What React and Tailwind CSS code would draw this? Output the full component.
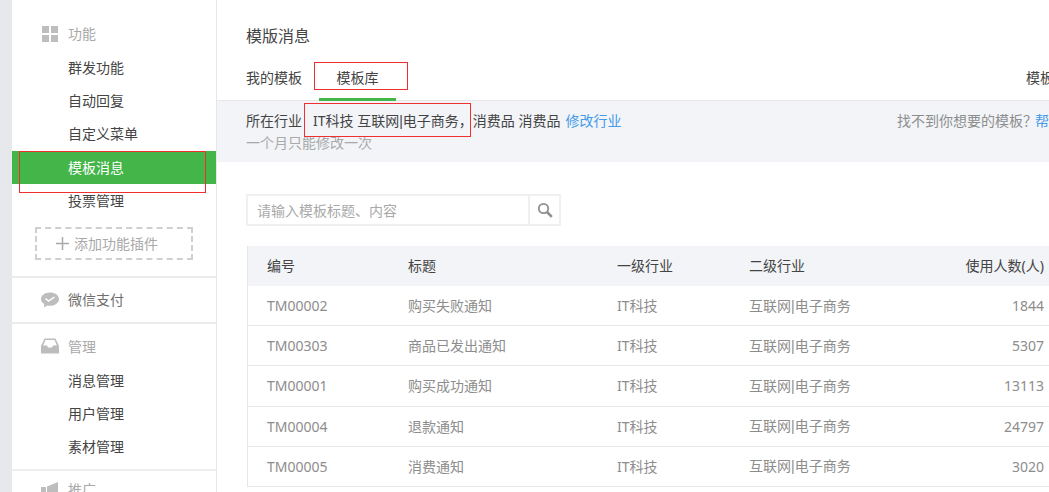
import React from 'react';

const FONT = 'font-["Noto_Sans","Noto_Sans_CJK_SC",sans-serif]';
const COLS = 'grid grid-cols-[141px_209px_132px_150px_145px] items-center pl-[19px]';

const rows = [
    ['TM00002', '购买失败通知', '1844'],
    ['TM00303', '商品已发出通知', '5307'],
    ['TM00001', '购买成功通知', '13113'],
    ['TM00004', '退款通知', '24797'],
    ['TM00005', '消费通知', '3020'],
];

const Pipe = () => <span className='font-["Liberation_Sans",sans-serif]'>|</span>;

const GridIcon = () => (
    <svg width="16" height="16" viewBox="0 0 16 16" fill="#bdbdbd" className="ml-[1px]">
        <rect x="0" y="0" width="7" height="7" />
        <rect x="9" y="0" width="7" height="7" />
        <rect x="0" y="9" width="7" height="7" />
        <rect x="9" y="9" width="7" height="7" />
    </svg>
);

const PayIcon = () => (
    <svg width="18" height="16" viewBox="0 0 18 16">
        <path d="M9 0.5C4 0.5 0 3.4 0 7c0 2.1 1.3 3.9 3.3 5.1L3 15.500l3.400-2C7.200 13.700 8.100 13.800 9 13.800c5 0 9-3 9-6.800S14 0.500 9 0.500z" fill="#bdbdbd" />
        <path d="M4.500 6.500l3 2.500 6-4" fill="none" stroke="#fff" strokeWidth="1.500" />
    </svg>
);

const InboxIcon = () => (
    <svg width="18" height="16" viewBox="0 0 18 16">
        <path d="M3.500 0.500h11L18 8v7.500H0V8z" fill="#bdbdbd" />
        <path d="M4.500 2h9l2.300 5.500H12l-1 2H7l-1-2H2.200z" fill="#fff" />
    </svg>
);

const PromoIcon = () => (
    <svg width="18" height="16" viewBox="0 0 18 16" fill="#bdbdbd">
        <path d="M0 6h5v6H0z" />
        <path d="M6 5.500L17 1v15L6 12.500z" />
    </svg>
);

const SearchIcon = () => (
    <svg width="16" height="16" viewBox="0 0 16 16" fill="none" stroke="#8f8f8f">
        <circle cx="6.500" cy="6.500" r="4.700" strokeWidth="1.800" />
        <path d="M10 10l4.800 4.800" strokeWidth="2.600" />
    </svg>
);

const NavHead = ({ icon, label, dark }) => (
    <div className={`h-[33px] pl-[29px] pb-[1px] flex items-center text-[14px] ${dark ? 'text-[#6f6f6f]' : 'text-[#a9a9a9]'}`}>
        <div className="w-[27px] flex justify-start">{icon}</div>
        <span>{label}</span>
    </div>
);

const NavItem = ({ label, active }) => (
    <div className={`h-[33.4px] flex items-center pl-[56px] text-[14px] ${active ? 'bg-[#44b549] text-white' : 'text-[#444]'}`}>
        {label}
    </div>
);

const Sidebar = () => (
    <aside className="w-[205px] shrink-0 bg-white border-r border-[#e7e7eb]">
        <div className="pt-[17.5px] pb-[16px]">
            <NavHead icon={<GridIcon />} label="功能" />
            <NavItem label="群发功能" />
            <NavItem label="自动回复" />
            <NavItem label="自定义菜单" />
            <NavItem label="模板消息" active />
            <NavItem label="投票管理" />
            <div className="mt-[10px] ml-[23px] w-[158px] h-[33px] pl-[19px] border-2 border-dashed border-[#cfcfcf] flex items-center gap-[5px] text-[14px] text-[#a9a9a9]">
                <svg width="13" height="13" viewBox="0 0 13 13" stroke="#a9a9a9" strokeWidth="1.500">
                    <path d="M6.500 0v13M0 6.500h13" />
                </svg>
                <span>添加功能插件</span>
            </div>
        </div>
        <div className="border-t-2 border-[#ececef] h-[46px] flex items-center">
            <NavHead icon={<PayIcon />} label="微信支付" dark />
        </div>
        <div className="border-t-2 border-[#ececef] pt-[6px] h-[147px]">
            <NavHead icon={<InboxIcon />} label="管理" />
            <NavItem label="消息管理" />
            <NavItem label="用户管理" />
            <NavItem label="素材管理" />
        </div>
        <div className="border-t-2 border-[#eeeeee] pt-[2px]">
            <NavHead icon={<PromoIcon />} label="推广" />
        </div>
    </aside>
);

const Main = () => (
    <main className="flex-1 min-w-0 text-[14px] text-[#444]">
        <h2 className="pl-[29px] pt-[24px] h-[59px] text-[16px] font-normal leading-[24px]">模版消息</h2>
        <div className="h-[42px] flex pl-[29px] border-b border-[#e7e7eb] leading-[20px]">
            <span className="w-[73px] pt-[9px]">我的模板</span>
            <span className="w-[77px] pt-[9px] text-center border-b-[3px] border-[#44b549] -mb-px">模板库</span>
            <span className="ml-auto pt-[9px] whitespace-nowrap w-[23px] overflow-hidden">模板消息</span>
        </div>
        <div className="h-[61px] bg-[#f2f4f8] pl-[29px] pt-[9px] leading-[21px]">
            <div className="flex">
                <span>所在行业</span>
                <span className="ml-[11px]">IT科技 互联网<Pipe />电子商务，消费品 消费品</span>
                <span className="ml-[5px] text-[#459ae9]">修改行业</span>
                <span className="ml-auto whitespace-nowrap w-[152px] overflow-hidden text-[#8d8d8d]">找不到你想要的模板？<span className="ml-[-2px] text-[#459ae9]">帮助</span></span>
            </div>
            <div className="text-[#a9a9a9]">一个月只能修改一次</div>
        </div>
        <div className="mt-[32px] ml-[29px] w-[315px] h-[32px] flex border-2 border-[#f0f0f0]">
            <div className="flex-1 pl-[9px] pt-[1px] flex items-center text-[#a9a9a9]">请输入模板标题、内容</div>
            <div className="w-[31px] border-l-2 border-[#f0f0f0] flex items-center justify-center"><SearchIcon /></div>
        </div>
        <div className="mt-[20px] ml-[30px] w-[830px] border-l border-[#e7e7eb]">
            <div className={`h-[40px] pb-[1px] bg-[#f2f4f8] ${COLS}`}>
                <span>编号</span>
                <span>标题</span>
                <span>一级行业</span>
                <span>二级行业</span>
                <span className="text-right">使用人数(人)</span>
            </div>
            {rows.map((r) => (
                <div key={r[0]} className={`h-[40.2px] border-b border-[#e7e7eb] ${COLS} text-[#8d8d8d]`}>
                    <span>{r[0]}</span>
                    <span>{r[1]}</span>
                    <span>IT科技</span>
                    <span>互联网<Pipe />电子商务</span>
                    <span className="text-right">{r[2]}</span>
                </div>
            ))}
        </div>
    </main>
);

export default function App() {
    return (
        <div className={`relative w-[1049px] h-[492px] overflow-hidden flex bg-white ${FONT}`}>
            <div className="w-[12px] shrink-0 bg-[#e7e8eb]" />
            <Sidebar />
            <Main />
            {/* red markup boxes drawn over the screenshot */}
            <div className="absolute left-[19px] top-[151px] w-[187px] h-[42px] border border-[#f03030]" />
            <div className="absolute left-[314px] top-[62px] w-[94px] h-[28px] border border-[#f03030]" />
            <div className="absolute left-[304px] top-[103px] w-[167px] h-[34px] border border-[#f03030]" />
        </div>
    );
}
